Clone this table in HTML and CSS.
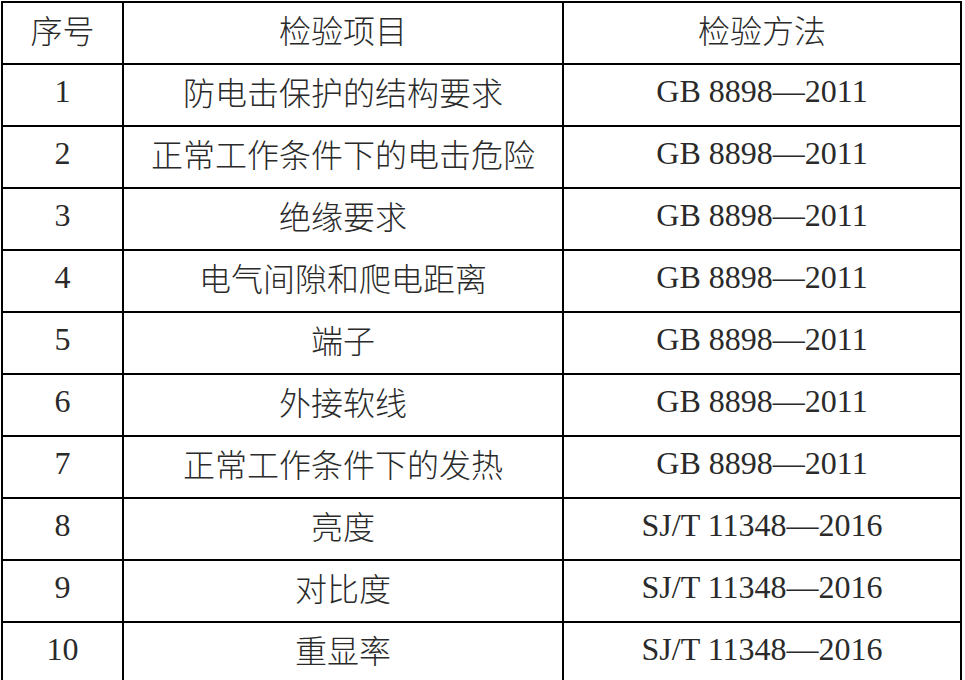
FILE: index.html
```html
<!DOCTYPE html>
<html lang="zh-CN">
<head>
<meta charset="utf-8">
<title>检验项目</title>
<link rel="stylesheet" href="styles.css">
</head>
<body>
<table class="spec">
  <thead>
    <tr>
      <th class="c-no">序号</th>
      <th class="c-item">检验项目</th>
      <th class="c-method">检验方法</th>
    </tr>
  </thead>
  <tbody>
    <tr><td class="num">1</td><td class="cn">防电击保护的结构要求</td><td class="std">GB 8898—2011</td></tr>
    <tr><td class="num">2</td><td class="cn">正常工作条件下的电击危险</td><td class="std">GB 8898—2011</td></tr>
    <tr><td class="num">3</td><td class="cn">绝缘要求</td><td class="std">GB 8898—2011</td></tr>
    <tr><td class="num">4</td><td class="cn">电气间隙和爬电距离</td><td class="std">GB 8898—2011</td></tr>
    <tr><td class="num">5</td><td class="cn">端子</td><td class="std">GB 8898—2011</td></tr>
    <tr><td class="num">6</td><td class="cn">外接软线</td><td class="std">GB 8898—2011</td></tr>
    <tr><td class="num">7</td><td class="cn">正常工作条件下的发热</td><td class="std">GB 8898—2011</td></tr>
    <tr><td class="num">8</td><td class="cn">亮度</td><td class="std">SJ/T 11348—2016</td></tr>
    <tr><td class="num">9</td><td class="cn">对比度</td><td class="std">SJ/T 11348—2016</td></tr>
    <tr><td class="num">10</td><td class="cn">重显率</td><td class="std">SJ/T 11348—2016</td></tr>
  </tbody>
</table>
</body>
</html>
```
FILE: styles.css
```css
html, body {
  margin: 0;
  padding: 0;
  overflow: hidden;
  background: #fff;
}
body {
  padding: 1px 0 0 1px;
  color: #2a2a2a;
}
.spec {
  box-sizing: border-box;
  width: 961px;
  table-layout: fixed;
  border-collapse: separate;
  border-spacing: 0;
  border-top: 2px solid #000;
  border-left: 2px solid #000;
}
.spec th, .spec td {
  box-sizing: border-box;
  height: 62px;
  padding: 0 0 8px 0;
  border-right: 2px solid #000;
  border-bottom: 2px solid #000;
  text-align: center;
  vertical-align: middle;
  white-space: nowrap;
  line-height: 1;
}
.spec th {
  font-family: "Noto Sans CJK SC", "Noto Sans", sans-serif;
  font-weight: 300;
  font-size: 32px;
}
.c-no { width: 121px; }
.c-item { width: 440px; }
.c-method { width: 398px; }
.cn {
  font-family: "Noto Sans CJK SC", "Noto Sans", sans-serif;
  font-weight: 300;
  font-size: 32px;
}
.num, .std {
  font-family: "Liberation Serif", "Times New Roman", serif;
  font-size: 32px;
}
```
